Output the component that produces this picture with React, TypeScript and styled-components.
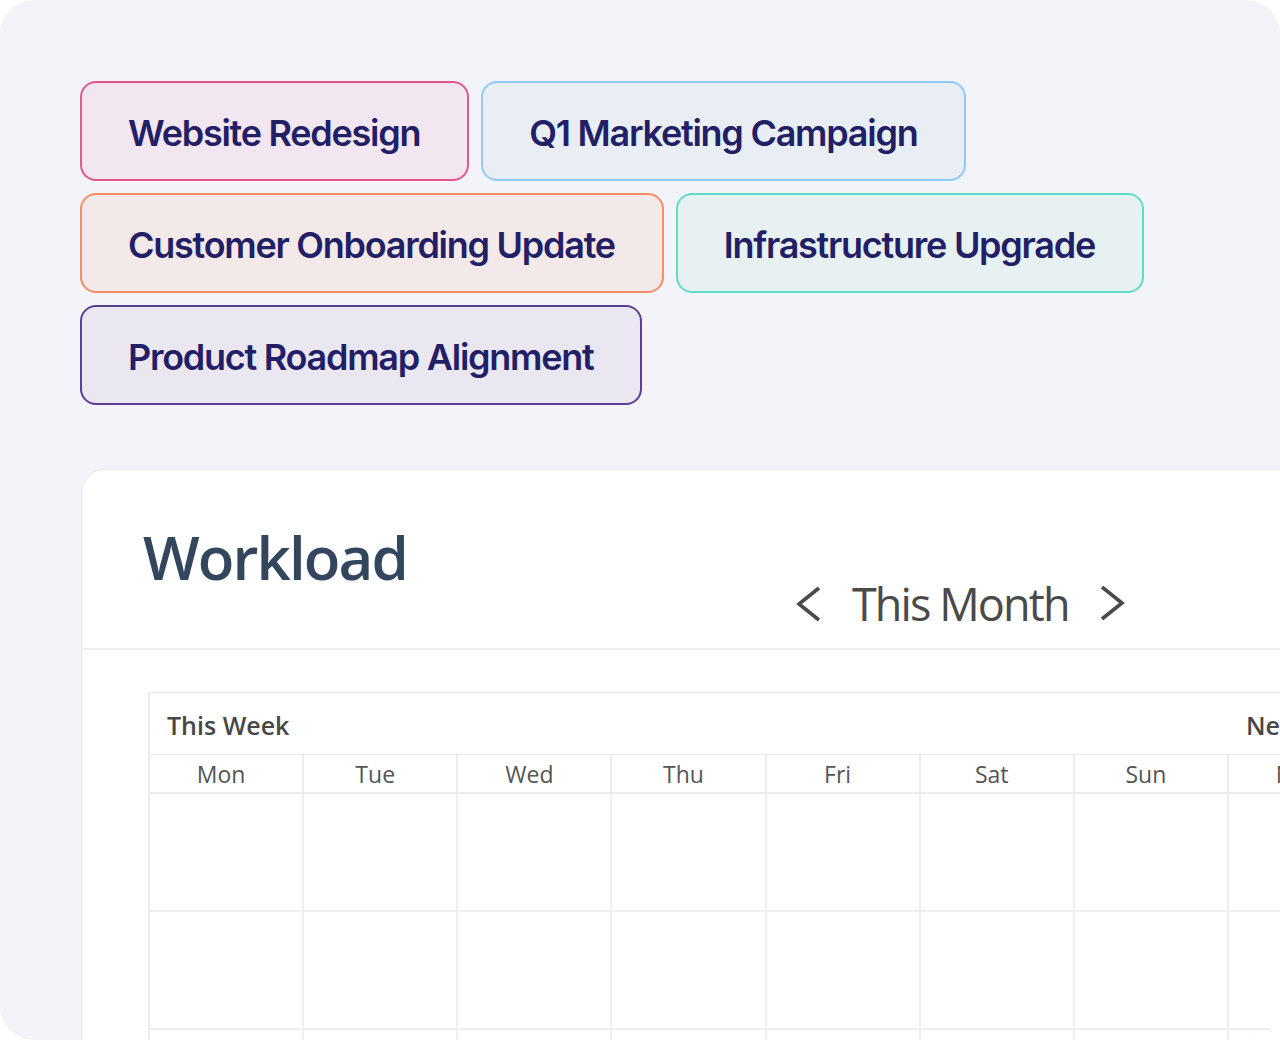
import React from "react";
import styled, { createGlobalStyle } from "styled-components";

const GlobalStyle = createGlobalStyle`
  html, body {
    margin: 0;
    padding: 0;
    background: #ffffff;
  }
  * { box-sizing: border-box; }
`;

const Frame = styled.div`
  width: 1280px;
  height: 1040px;
  border-radius: 34px;
  background: #f3f4f9;
  overflow: hidden;
  padding: 81px 0 0 80px;
`;

const TagList = styled.div`
  display: flex;
  flex-wrap: wrap;
  gap: 12px;
  width: 1100px;
`;

type Tone = { border: string; bg: string };

const Tag = styled.div<{ $tone: Tone }>`
  height: 100px;
  display: flex;
  align-items: center;
  padding: 4px 47px 0 46px;
  border: 2px solid ${(p) => p.$tone.border};
  background: ${(p) => p.$tone.bg};
  border-radius: 16px;
  font-family: Inter, "Noto Sans", sans-serif;
  font-weight: 600;
  font-size: 36px;
  letter-spacing: -0.035em;
  color: #221f66;
  white-space: nowrap;
`;

const Card = styled.div`
  margin: 64px 0 0 1px;
  width: 2400px;
  height: 700px;
  background: #ffffff;
  border: 1px solid #e8e9ee;
  border-radius: 24px;
`;

const CardHeader = styled.div`
  height: 180px;
  display: flex;
  align-items: flex-start;
  padding: 46px 0 0 61px;
  border-bottom: 2px solid #eeeeee;
`;

const Title = styled.h1`
  margin: 0;
  font-family: "Open Sans", "Noto Sans", sans-serif;
  font-weight: 600;
  font-size: 60px;
  letter-spacing: -1.9px;
  color: #34455e;
`;

const Nav = styled.div`
  display: flex;
  align-items: center;
  gap: 30px;
  margin: 57px 0 0 389px;
`;

const NavLabel = styled.span`
  font-family: "Open Sans", "Noto Sans", sans-serif;
  font-weight: 400;
  font-size: 45px;
  letter-spacing: -1.9px;
  color: #4a4a4a;
  white-space: nowrap;
`;

const Chevron = styled.svg`
  display: block;
  flex: none;
`;

const CalendarArea = styled.div`
  padding: 42px 0 0 66px;
`;

const Weeks = styled.div`
  display: flex;
  border-top: 1px solid #e6e6e6;
  border-left: 2px solid #ececec;
`;

const Week = styled.div`
  width: 1079px;
  flex: none;
`;

const WeekTitle = styled.div`
  height: 62px;
  display: flex;
  align-items: center;
  padding: 2px 0 0 17px;
  font-family: "Open Sans", "Noto Sans", sans-serif;
  font-weight: 600;
  font-size: 25px;
  color: #474747;
  border-bottom: 1px solid #e6e6e6;
`;

const DayGrid = styled.div`
  display: grid;
  grid-template-columns: repeat(7, 1fr);
`;

const DayName = styled.div`
  height: 39px;
  display: flex;
  align-items: center;
  justify-content: center;
  padding-right: 10px;
  font-family: "Open Sans", "Noto Sans", sans-serif;
  font-size: 23px;
  color: #555555;
  border-right: 2px solid #ececec;
  border-bottom: 2px solid #ececec;
`;

const Cell = styled.div`
  height: 118px;
  border-right: 2px solid #efefef;
  border-bottom: 2px solid #efefef;
`;

const tags: { label: string; tone: Tone }[] = [
  { label: "Website Redesign", tone: { border: "#e5568e", bg: "#f2e6f0" } },
  { label: "Q1 Marketing Campaign", tone: { border: "#8ecbfa", bg: "#e8eef3" } },
  { label: "Customer Onboarding Update", tone: { border: "#fb8a66", bg: "#f3e9e8" } },
  { label: "Infrastructure Upgrade", tone: { border: "#5fdcc8", bg: "#e8f1f1" } },
  { label: "Product Roadmap Alignment", tone: { border: "#5b3f97", bg: "#ebe7f1" } },
];

const days = ["Mon", "Tue", "Wed", "Thu", "Fri", "Sat", "Sun"];

const WeekBlock: React.FC<{ title: string }> = ({ title }) => (
  <Week>
    <WeekTitle>{title}</WeekTitle>
    <DayGrid>
      {days.map((d) => (
        <DayName key={d}>{d}</DayName>
      ))}
      {Array.from({ length: 21 }).map((_, i) => (
        <Cell key={i} />
      ))}
    </DayGrid>
  </Week>
);

export default function App() {
  return (
    <>
      <GlobalStyle />
      <Frame>
        <TagList>
          {tags.map((t) => (
            <Tag key={t.label} $tone={t.tone}>
              {t.label}
            </Tag>
          ))}
        </TagList>
        <Card>
          <CardHeader>
            <Title>Workload</Title>
            <Nav>
              <Chevron width="26" height="36" viewBox="0 0 26 36">
                <polyline points="23,2 3,18 23,34" fill="none" stroke="#4a4a4a" strokeWidth="3.6" />
              </Chevron>
              <NavLabel>This Month</NavLabel>
              <Chevron width="26" height="36" viewBox="0 0 26 36">
                <polyline points="3,1 23,17 3,33" fill="none" stroke="#4a4a4a" strokeWidth="3.6" />
              </Chevron>
            </Nav>
          </CardHeader>
          <CalendarArea>
            <Weeks>
              <WeekBlock title="This Week" />
              <WeekBlock title="Next Week" />
            </Weeks>
          </CalendarArea>
        </Card>
      </Frame>
    </>
  );
}
